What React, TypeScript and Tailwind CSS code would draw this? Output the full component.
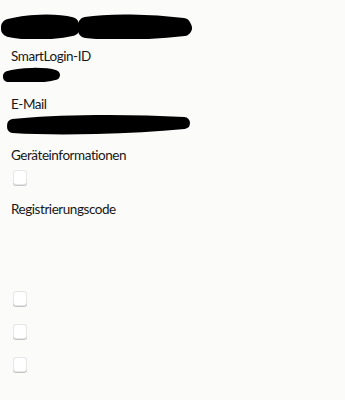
const Redaction = ({ h, children }: { h: number; children: React.ReactNode }) => (
  <svg width="345" height={h} viewBox={`0 0 345 ${h}`} className="block">
    <g fill="none" stroke="#000" strokeLinecap="round" strokeLinejoin="round">
      {children}
    </g>
  </svg>
)

const Label = ({ text, className = "" }: { text: string; className?: string }) => (
  <p className={"h-5 px-[11px] text-[13.5px] leading-5 tracking-[-0.45px] text-[#171717] " + className}>{text}</p>
)

const Box = ({ className = "" }: { className?: string }) => (
  <div
    className={
      "ml-[13px] h-[15px] w-[14px] rounded-[3px] border border-[#e6e6e6] bg-white shadow-[0_1px_0_#c4c4c4] " +
      className
    }
  />
)

export default function App() {
  return (
    <div className="h-[400px] w-[345px] bg-[#fbfbfa] pt-[13px] font-['Lato',sans-serif]">
      <Redaction h={26}>
        <path d="M9 14 C 25 9, 55 8, 71 12 L 72 15 C 55 19, 25 20, 9 16" strokeWidth="16" />
        <path d="M86 12 C 110 8, 150 9, 183 13 L 184 15 C 150 19, 110 20, 86 17" strokeWidth="16" />
      </Redaction>
      <Label text="SmartLogin-ID" className="mt-[7px]" />
      <Redaction h={16}>
        <path d="M8 10 C 20 6, 45 6, 55 9 C 45 12, 20 13, 8 11" strokeWidth="10" />
      </Redaction>
      <Label text="E-Mail" className="mt-[12px]" />
      <Redaction h={24}>
        <path d="M13 11 C 60 6, 130 6, 184 9 C 130 14, 60 16, 13 13" strokeWidth="12" />
      </Redaction>
      <Label text="Geräteinformationen" className="mt-[7px]" />
      <Box className="mt-[5px]" />
      <Label text="Registrierungscode" className="mt-[14px]" />
      <Box className="mt-[72px]" />
      <Box className="mt-[18px]" />
      <Box className="mt-[18px]" />
    </div>
  )
}
